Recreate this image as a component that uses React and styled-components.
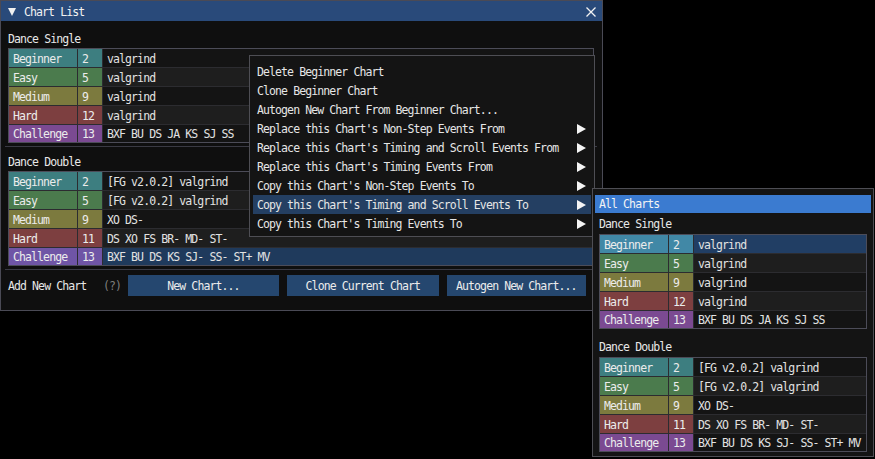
import React from "react";
import styled, { createGlobalStyle } from "styled-components";

const GlobalStyle = createGlobalStyle`
  html, body {
    margin: 0;
    padding: 0;
    background: #000;
  }
  body {
    font-family: "DejaVu Sans Mono", "Liberation Mono", monospace;
    font-size: 11.5px;
    letter-spacing: -0.9px;
    color: #e6e6e6;
  }
`;

const Screen = styled.div`
  position: relative;
  width: 875px;
  height: 459px;
  overflow: hidden;
  background: #000;
`;

const Window = styled.section`
  width: 603px;
  height: 311px;
  box-sizing: border-box;
  border: 1px solid #4a4a55;
  background: #0f0f0f;
  display: flex;
  flex-direction: column;
`;

const TitleBar = styled.header`
  height: 20px;
  box-sizing: border-box;
  padding: 1px 6px 0 7px;
  background: #294a7a;
  display: flex;
  align-items: center;
  gap: 8px;
`;

const CollapseArrow = styled.span`
  width: 0;
  height: 0;
  border-top: 8px solid #f0f0f0;
  border-left: 4px solid transparent;
  border-right: 4px solid transparent;
`;

const TitleText = styled.span`
  flex: 1;
  color: #f2f2f2;
`;

const Body = styled.div`
  padding: 8px 8px 0 7px;
  display: flex;
  flex-direction: column;
`;

const SectionLabel = styled.div`
  height: ${(p) => p.$h || 19}px;
  margin-top: ${(p) => p.$top || 0}px;
  box-sizing: border-box;
  padding-top: 1px;
  display: flex;
  align-items: center;
  color: #e8e8e8;
`;

const Table = styled.div`
  display: flex;
  flex-direction: column;
  gap: 1px;
  border: 1px solid #4c4c58;
  background: #2c2c30;
`;

const Row = styled.div`
  display: grid;
  grid-template-columns: 68px 24px 1fr;
  gap: 1px;
  height: 18px;
  &:last-child {
    height: 17px;
  }
`;

const Cell = styled.div`
  background: ${(p) => p.$bg};
  display: flex;
  align-items: center;
  padding: 1px 4px 0;
  white-space: nowrap;
  overflow: hidden;
  color: ${(p) => (p.$label ? "#ececec" : "#e2e2e2")};
`;

const Separator = styled.hr`
  border: 0;
  height: 1px;
  background: #3a3a44;
  margin: 3px -3px 5px -3px;
`;

const ButtonRow = styled.div`
  display: flex;
  align-items: center;
  height: 21px;
`;

const AddLabel = styled.span`
  width: 96px;
  color: #e6e6e6;
`;

const HelpMark = styled.span`
  width: 25px;
  color: #7d7d7d;
`;

const Button = styled.button`
  width: ${(p) => p.$w}px;
  height: 21px;
  margin-right: 8px;
  border: 0;
  padding: 0;
  background: #25476f;
  color: #ececec;
  font: inherit;
  letter-spacing: inherit;
  white-space: nowrap;
  overflow: hidden;
`;

const ContextMenu = styled.div`
  position: absolute;
  left: 249px;
  top: 55px;
  width: 346px;
  height: 182px;
  box-sizing: border-box;
  border: 1px solid #4e4e54;
  background: #141414;
  padding: 6px 3px 3px;
`;

const MenuItem = styled.div`
  height: 19px;
  display: flex;
  align-items: center;
  padding: 0 5px 0 4px;
  background: ${(p) => (p.$active ? "#243f62" : "transparent")};
  color: #e6e6e6;
`;

const SubArrow = styled.span`
  margin-left: auto;
  width: 0;
  height: 0;
  border-left: 9px solid #f4f4f4;
  border-top: 5px solid transparent;
  border-bottom: 5px solid transparent;
`;

const Popup = styled.div`
  position: absolute;
  left: 592px;
  top: 188px;
  width: 282px;
  height: 269px;
  box-sizing: border-box;
  border: 1px solid #4e4e54;
  background: #141414;
  padding: 6px 6px 4px;
  display: flex;
  flex-direction: column;
`;

const PopupBar = styled.div`
  height: 18px;
  box-sizing: border-box;
  margin: 0 -4px;
  padding: 1px 4px 0;
  display: flex;
  align-items: center;
  background: #3b7bd0;
  color: #f4f4f4;
`;

const COLORS = {
  Beginner: "#3d7e80",
  Easy: "#4b7b4d",
  Medium: "#7c7a3e",
  Hard: "#7d3f40",
  Challenge: "#7b4a92",
};

const single = [
  { name: "Beginner", level: 2, text: "valgrind" },
  { name: "Easy", level: 5, text: "valgrind" },
  { name: "Medium", level: 9, text: "valgrind" },
  { name: "Hard", level: 12, text: "valgrind" },
  { name: "Challenge", level: 13, text: "BXF BU DS JA KS SJ SS" },
];

const double = [
  { name: "Beginner", level: 2, text: "[FG v2.0.2] valgrind" },
  { name: "Easy", level: 5, text: "[FG v2.0.2] valgrind" },
  { name: "Medium", level: 9, text: "XO DS-" },
  { name: "Hard", level: 11, text: "DS XO FS BR- MD- ST-" },
  { name: "Challenge", level: 13, text: "BXF BU DS KS SJ- SS- ST+ MV" },
];

// tinted colours for a selected / hovered row
const TINT = {
  Beginner: "#4188a6",
  Challenge: "#6f55a6",
};

function ChartTable({ charts, highlight, hiColor }) {
  return (
    <Table>
      {charts.map((c, i) => {
        const hi = highlight === c.name;
        const label = hi ? TINT[c.name] : COLORS[c.name];
        const rowBg = hi ? hiColor : i % 2 ? "#1e1e1e" : "#141414";
        return (
          <Row key={c.name}>
            <Cell $bg={label} $label>
              {c.name}
            </Cell>
            <Cell $bg={label} $label>
              {c.level}
            </Cell>
            <Cell $bg={rowBg}>{c.text}</Cell>
          </Row>
        );
      })}
    </Table>
  );
}

const menu = [
  { label: "Delete Beginner Chart" },
  { label: "Clone Beginner Chart" },
  { label: "Autogen New Chart From Beginner Chart..." },
  { label: "Replace this Chart's Non-Step Events From", sub: true },
  { label: "Replace this Chart's Timing and Scroll Events From", sub: true },
  { label: "Replace this Chart's Timing Events From", sub: true },
  { label: "Copy this Chart's Non-Step Events To", sub: true },
  { label: "Copy this Chart's Timing and Scroll Events To", sub: true, active: true },
  { label: "Copy this Chart's Timing Events To", sub: true },
];

export default function App() {
  return (
    <Screen>
      <GlobalStyle />
      <Window>
        <TitleBar>
          <CollapseArrow />
          <TitleText>Chart List</TitleText>
          <svg width="10" height="10" viewBox="0 0 10 10">
            <path d="M0.5 0.5 L9.5 9.5 M9.5 0.5 L0.5 9.5" stroke="#f2f2f2" strokeWidth="1.3" />
          </svg>
        </TitleBar>
        <Body>
          <SectionLabel>Dance Single</SectionLabel>
          <ChartTable charts={single} />
          <Separator />
          <SectionLabel>Dance Double</SectionLabel>
          <ChartTable charts={double} highlight="Challenge" hiColor="#1f3a5c" />
          <Separator />
          <ButtonRow>
            <AddLabel>Add New Chart</AddLabel>
            <HelpMark>(?)</HelpMark>
            <Button $w={153}>New Chart...</Button>
            <Button $w={153}>Clone Current Chart</Button>
            <Button $w={141}>Autogen New Chart...</Button>
          </ButtonRow>
        </Body>
      </Window>

      <ContextMenu>
        {menu.map((m) => (
          <MenuItem key={m.label} $active={m.active}>
            {m.label}
            {m.sub && <SubArrow />}
          </MenuItem>
        ))}
      </ContextMenu>

      <Popup>
        <PopupBar>All Charts</PopupBar>
        <SectionLabel $h={22}>Dance Single</SectionLabel>
        <ChartTable charts={single} highlight="Beginner" hiColor="#213e64" />
        <SectionLabel $h={22} $top={6}>
          Dance Double
        </SectionLabel>
        <ChartTable charts={double} />
      </Popup>
    </Screen>
  );
}
